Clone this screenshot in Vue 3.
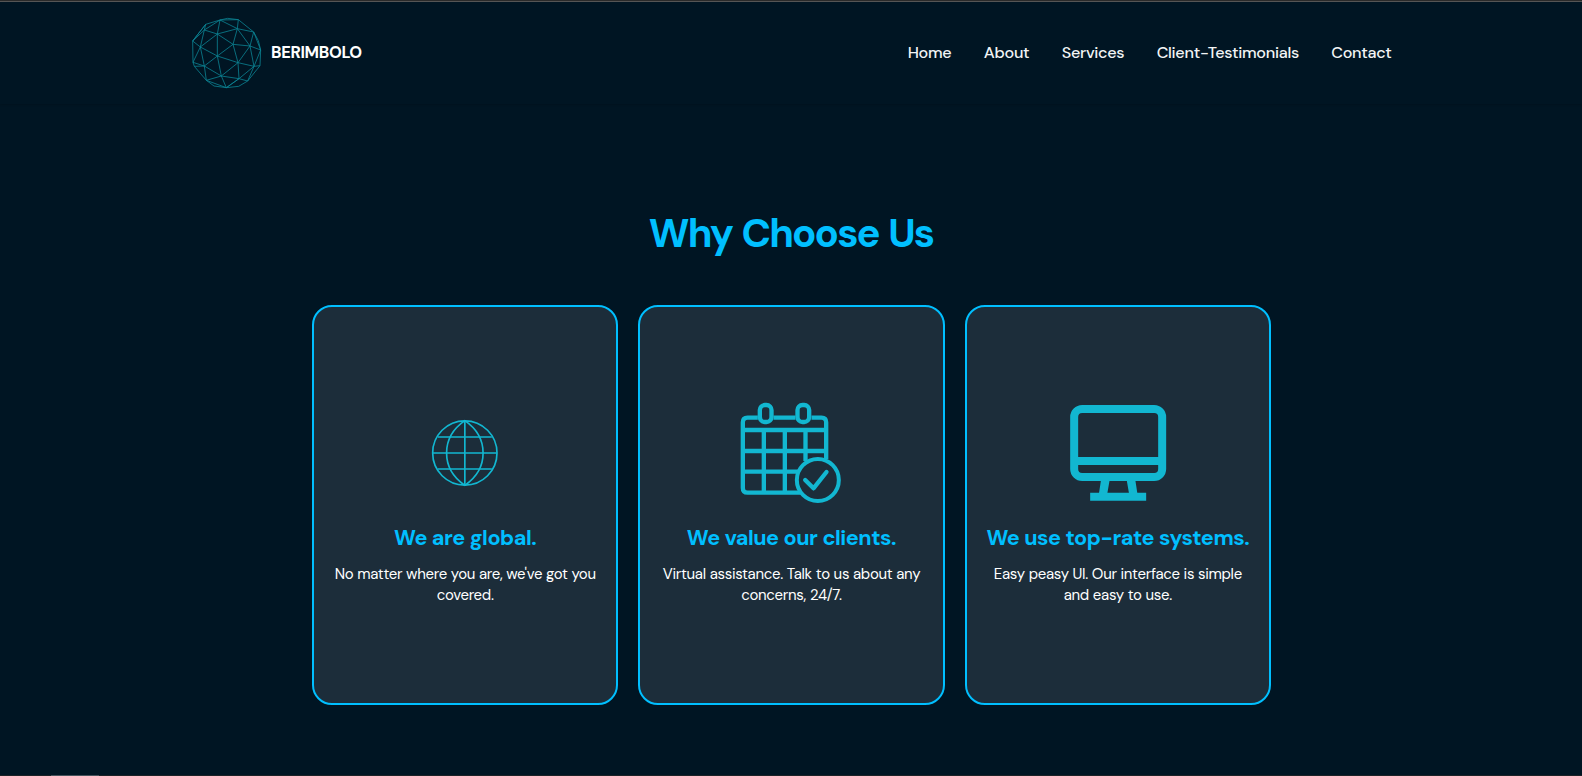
<script setup>
const links = ['Home', 'About', 'Services', 'Client-Testimonials', 'Contact']
const cards = [
  { icon: 'globe', box: '-44.5 -15 360 345', title: 'We are global.', lines: ["No matter where you are, we've got you", 'covered.'] },
  { icon: 'calendar', box: '3.5 0 360 345', title: 'We value our clients.', lines: ['Virtual assistance. Talk to us about any', 'concerns, 24/7.'] },
  { icon: 'monitor', box: '-6.5 0 360 345', title: 'We use top-rate systems.', lines: ['Easy peasy UI. Our interface is simple', 'and easy to use.'] },
]
</script>

<template>
  <div class="page">
    <header class="header">
      <div class="brand">
        <svg class="logo" viewBox="30 48 222 222" fill="none">
          <path d="M77 73L120 60L143 55L175 59L221 96L235 122L242 150L240 197L203 243L176 259L139 263L102 258L79 241L43 199L39 187L38 123Z" />
          <path d="M77 73L73 90L38 123L61 141L39 187L73 198L79 241L124 228L139 263L177 236L203 243L222 199L240 197M120 60L73 90L61 141L73 198L112 168L61 141L112 102L73 90M120 60L112 102L172 86L120 60L175 59L172 86L221 96L210 138L172 86L159 133L112 102V168L159 133L210 138L242 150L221 96M112 168L174 188L159 133M112 168L124 228L73 198M174 188L124 228L177 236L174 188L222 199L210 138L174 188M242 150L222 199L177 236L139 263L79 241M77 73L38 123M43 199L73 198" />
        </svg>
        <span class="name">BERIMBOLO</span>
      </div>
      <nav class="nav">
        <a v-for="l in links" :key="l">{{ l }}</a>
      </nav>
    </header>

    <main class="main">
      <h2 class="heading">Why Choose Us</h2>
      <div class="cards">
        <article v-for="c in cards" :key="c.icon" class="card">
          <svg class="icon" :viewBox="c.box" fill="none">
            <g v-if="c.icon === 'globe'" stroke-width="5">
              <circle cx="135" cy="159" r="96.5" />
              <path d="M135 62V256M39 159H231M54 111H216M54 207H216" />
              <path d="M135 62C62 112 62 206 135 256C208 206 208 112 135 62Z" />
            </g>
            <g v-else-if="c.icon === 'calendar'" stroke-width="13">
              <path d="M84 68H53Q39 68 39 82V279Q39 293 53 293H212M131 68H197M245 68H275Q289 68 289 82V192" />
              <path d="M39 105H289M39 168H289M39 230H204M102 105V293M165 105V293M227 105V198" />
              <rect x="90" y="30" width="35" height="51" rx="15" />
              <rect x="203" y="30" width="35" height="51" rx="15" />
              <circle cx="264" cy="255" r="63" stroke-width="12" />
              <path d="M226 255L251 280L290 231" stroke-linecap="round" stroke-linejoin="round" />
            </g>
            <g v-else stroke-width="24">
              <rect x="42" y="42" width="264" height="204" rx="24" />
              <path d="M42 198H306M90 305.500H258" />
              <path d="M123 252H149L141 298H116ZM199 252H225L232 298H207Z" class="solid" />
            </g>
          </svg>
          <h3>{{ c.title }}</h3>
          <p><span v-for="t in c.lines" :key="t">{{ t }}</span></p>
        </article>
      </div>
    </main>
    <footer class="edge"><i></i></footer>
  </div>
</template>

<style>
html, body { margin: 0; background: #001523; overflow: hidden; }
</style>

<style scoped>
.page {
  box-sizing: border-box;
  display: flex;
  flex-direction: column;
  height: 776px;
  border-top: 1px solid #2b2b2b;
  background: #001523;
  color: #fff;
  font-family: "DM Sans", Inter, "Liberation Sans", sans-serif;
}
.header {
  box-sizing: border-box;
  display: flex;
  flex: none;
  justify-content: space-between;
  height: 103px;
  padding: 0 190px;
  border-top: 1px solid #555;
  box-shadow: 0 1px 2px rgba(0, 0, 0, 0.15);
}
.brand { display: flex; }
.logo { width: 74px; height: 74px; margin-top: 14px; stroke: #0b8494; stroke-width: 2.4; }
.name { margin: 41px 0 0 7px; font-size: 16.4px; line-height: 20px; font-weight: 700; letter-spacing: -0.3px; }
.nav { display: flex; gap: 32.4px; margin: 41px 0.5px 0 0; font-size: 16.2px; line-height: 20px; font-weight: 500; color: #f2f4f5; }
.nav a { white-space: nowrap; letter-spacing: -0.3px; }
.main { flex: 1; }
.heading { margin: 103px 0 0; text-align: center; font-size: 40px; line-height: 52px; font-weight: 700; color: #00bfff; letter-spacing: -1.85px; word-spacing: 1.8px; }
.cards { display: grid; grid-template-columns: repeat(3, 1fr); gap: 20px; width: 959px; margin: 46px 0 0 312px; }
.card {
  box-sizing: border-box;
  display: flex;
  flex-direction: column;
  align-items: center;
  min-width: 0;
  height: 400px;
  padding-top: 88px;
  border: 2px solid #00bfff;
  border-radius: 20px;
  background: #1c2d3a;
}
.icon { flex: none; width: 120px; height: 115px; stroke: #12b7d1; }
.solid { fill: #12b7d1; stroke: none; }
h3 { margin: 14px 0 0; font-size: 21.6px; line-height: 28px; font-weight: 700; color: #00bfff; white-space: nowrap; letter-spacing: -0.46px; word-spacing: 0.3px; }
p { display: flex; flex-direction: column; align-items: center; margin: 12px 0 0; font-size: 15px; line-height: 21px; white-space: nowrap; letter-spacing: -0.32px; word-spacing: 0.25px; }
.edge { height: 1px; background: #1c2226; }
.edge i { display: block; width: 48px; height: 1px; margin-left: 51px; background: #46535b; }
</style>
